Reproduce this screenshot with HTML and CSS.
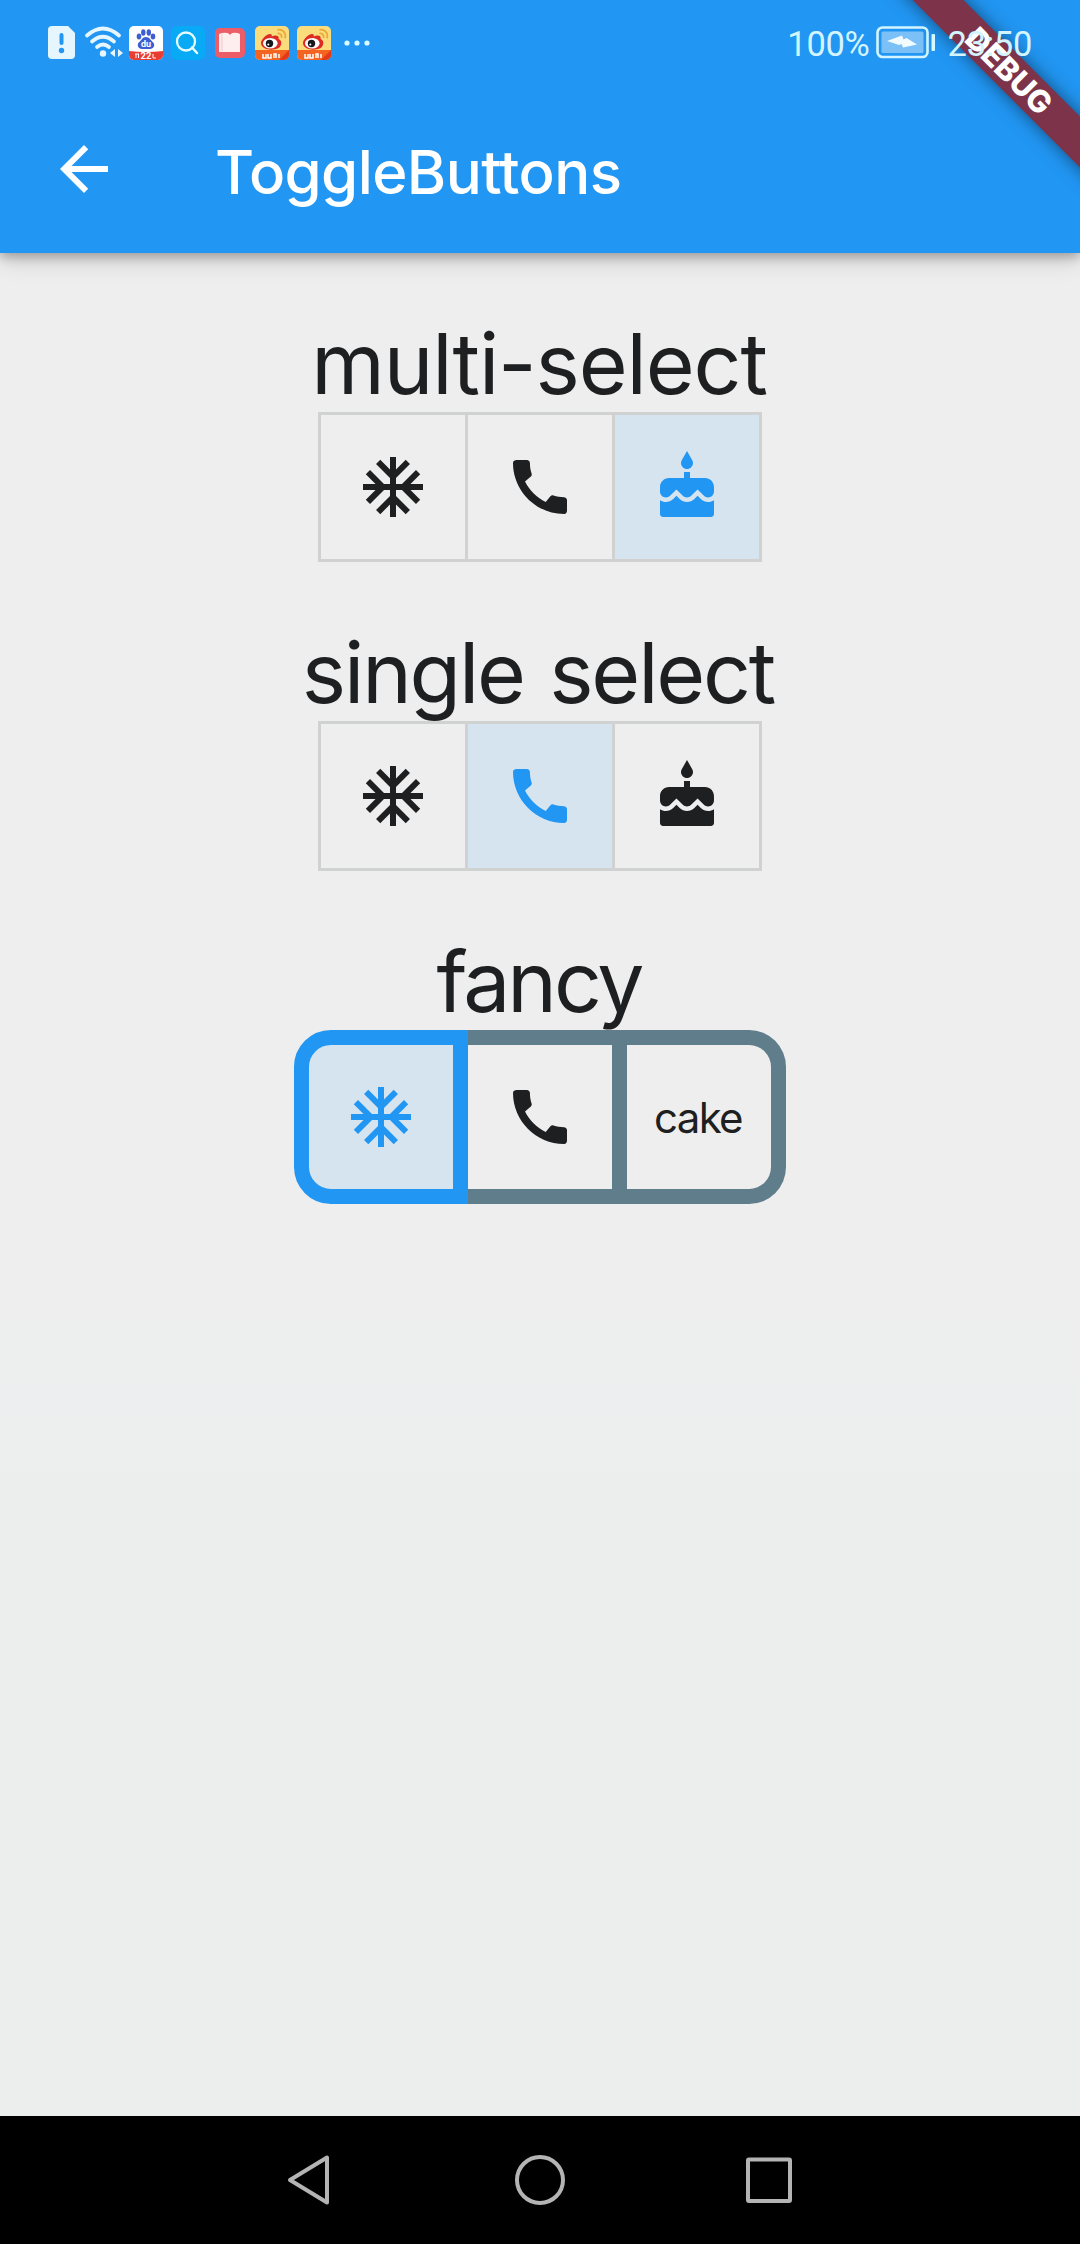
FILE: index.html
```html
<!DOCTYPE html>
<html lang="en">
<head>
<meta charset="utf-8">
<title>ToggleButtons</title>
<link rel="stylesheet" href="styles.css">
</head>
<body>
<svg class="defs" width="0" height="0">
  <symbol id="snow" viewBox="0 0 24 24"><path d="M22 11h-4.17l3.24-3.24-1.41-1.42L15 11h-2V9l4.66-4.66-1.42-1.41L13 6.17V2h-2v4.17L7.76 2.93 6.34 4.34 11 9v2H9L4.34 6.34 2.93 7.76 6.17 11H2v2h4.17l-3.24 3.24 1.41 1.42L9 13h2v2l-4.66 4.66 1.42 1.41L11 17.83V22h2v-4.17l3.24 3.24 1.42-1.41L13 15v-2h2l4.66 4.66 1.41-1.42L17.83 13H22z"/></symbol>
  <symbol id="call" viewBox="0 0 24 24"><path d="M20.01 15.38c-1.23 0-2.42-.2-3.53-.56-.35-.12-.74-.03-1.01.24l-1.57 1.97c-2.83-1.35-5.48-3.9-6.89-6.83l1.95-1.66c.27-.28.35-.67.24-1.02-.37-1.11-.56-2.3-.56-3.53 0-.54-.45-.99-.99-.99H4.19C3.65 3 3 3.24 3 3.99 3 13.28 10.73 21 20.01 21c.71 0 .99-.63.99-1.18v-3.45c0-.54-.45-.99-.99-.99z"/></symbol>
  <symbol id="cake" viewBox="0 0 24 24"><path d="M12 6c1.11 0 2-.9 2-2 0-.38-.1-.73-.29-1.03L12 0l-1.71 2.97c-.19.3-.29.65-.29 1.03 0 1.1.9 2 2 2zm4.6 9.99l-1.07-1.07-1.08 1.07c-1.3 1.3-3.58 1.31-4.89 0l-1.07-1.07-1.09 1.07C6.75 16.64 5.88 17 4.96 17c-.73 0-1.4-.23-1.96-.61V21c0 .55.45 1 1 1h16c.55 0 1-.45 1-1v-4.61c-.56.38-1.23.61-1.96.61-.92 0-1.79-.36-2.44-1.01zM18 9h-5V7h-2v2H6c-1.66 0-3 1.34-3 3v1.54c0 1.08.88 1.96 1.96 1.96.52 0 1.02-.2 1.38-.57l2.14-2.13 2.13 2.13c.74.74 2.03.74 2.77 0l2.14-2.13 2.13 2.13c.37.37.86.57 1.38.57 1.08 0 1.96-.88 1.96-1.96V12C21 10.34 19.66 9 18 9z"/></symbol>
  <symbol id="weibo" viewBox="0 0 34 34">
    <rect width="34" height="34" rx="5" fill="#fbdc7d"/>
    <path d="M0 24h34v5a5 5 0 0 1-5 5H5a5 5 0 0 1-5-5z" fill="#f4631f"/>
    <path d="M24 34l10-10v5a5 5 0 0 1-5 5z" fill="#e23a1a"/>
    <path d="M6 17c0-4 6-9 9-9 2 0 2 1 1.600 2.500 3-1.500 8-1.700 7 2.500 4 1 3.500 8-1 9.500-6 2.500-16.600 1-16.600-5.500z" fill="#dd2a22"/>
    <ellipse cx="15.300" cy="17.300" rx="7.300" ry="5.200" fill="#fff"/>
    <circle cx="14.500" cy="17.500" r="3.700" fill="#17181c"/><circle cx="13.300" cy="18.500" r="1" fill="#fff"/>
    <path d="M22.500 7.500c3-.6 4.800 2 4 4.500M22.500 3.800c5-1 9 3 7.600 8.600" fill="none" stroke="#e8a83a" stroke-width="1.700"/>
    <path d="M8 28v4h3v-4M13 28v4h3v-4M19 32v-4h2v4M24 28v4" fill="none" stroke="#fff" stroke-width="1.500"/>
  </symbol>
</svg>

<div class="phone">
  <header class="appbar">
    <div class="status">
      <div class="notices">
        <svg class="n-file" width="27" height="33" viewBox="0 0 27 33"><path d="M4 0h16l7 7v22a4 4 0 0 1-4 4H4a4 4 0 0 1-4-4V4a4 4 0 0 1 4-4z" fill="#e6f6ff"/><path d="M13.500 9v8" stroke="#2196f3" stroke-width="4" stroke-linecap="round"/><circle cx="13.500" cy="24.500" r="2.700" fill="#2196f3"/></svg>
        <svg class="n-wifi" width="38" height="33" viewBox="0 0 38 33"><g fill="none" stroke="#e6f6ff" stroke-width="3.700" stroke-linecap="round"><path d="M2 9.500Q18-4.500 34 9.500"/><path d="M7 15.500q11-9.500 22 0"/><path d="M12 21q6-5 12 0"/></g><circle cx="18" cy="27.500" r="3.200" fill="#e6f6ff"/><path d="M30 23v8l-5-4zM33 23v8l5-4z" fill="#e6f6ff"/></svg>
        <svg class="n-baidu" width="34" height="34" viewBox="0 0 34 34"><rect width="34" height="34" rx="5" fill="#fff"/><g fill="#3d5ed0"><ellipse cx="10" cy="10.500" rx="2.300" ry="3"/><ellipse cx="14.300" cy="6.500" rx="2.200" ry="3.200"/><ellipse cx="19.800" cy="6.500" rx="2.200" ry="3.200"/><ellipse cx="24" cy="10.500" rx="2.300" ry="3"/><path d="M17 11c3.500 0 4.500 3.200 7 5.200 2.600 2.600.8 6.800-3 6.800h-8c-3.800 0-5.600-4.200-3-6.800 2.500-2 3.500-5.200 7-5.200z"/></g><path d="M0 25q17 2 34 0v4a5 5 0 0 1-5 5H5a5 5 0 0 1-5-5z" fill="#ea3d32"/><text class="mini" x="17" y="21" font-size="9">du</text><text class="mini" x="17" y="33" font-size="9.500">22</text><path d="M6 28h4M7 28v4M9.500 28v4M24 28v4h3" fill="none" stroke="#fff"/></svg>
        <svg class="n-search" width="34" height="34" viewBox="0 0 34 34"><rect width="34" height="34" rx="6" fill="#08a9f5"/><circle cx="15" cy="15.500" r="9" fill="none" stroke="#e6fbff" stroke-width="2.300"/><path d="M21 21.500l5 5.500" stroke="#e6fbff" stroke-width="2.500" stroke-linecap="round"/></svg>
        <svg class="n-book" width="30" height="30" viewBox="0 0 30 30"><rect width="30" height="30" rx="5" fill="#ec5d68"/><path d="M4 6q6-2.500 11 0 5-2.500 10 0v18H4z" fill="#ffeeee"/><path d="M7 6v17" stroke="#f8ccd1" stroke-width="1.200"/><path d="M13 4.500h4l-2 2.500z" fill="#ec5d68"/></svg>
        <svg class="n-weibo" width="34" height="34"><use href="#weibo"/></svg>
        <svg class="n-weibo2" width="34" height="34"><use href="#weibo"/></svg>
        <svg class="n-dots" width="26" height="6" viewBox="0 0 26 6" fill="#d9fbff"><circle cx="3" cy="3" r="2.600"/><circle cx="13" cy="3" r="2.600"/><circle cx="23" cy="3" r="2.600"/></svg>
      </div>
      <div class="system">
        <span class="percent">100%</span>
        <svg class="battery" width="60" height="33" viewBox="0 0 60 33"><rect x="1.500" y="1.500" width="50" height="29.500" rx="5" fill="none" stroke="#d3f5ff" stroke-width="2.600"/><rect x="5.500" y="5.500" width="42" height="21.500" rx="1.500" fill="#7cc0f8"/><path d="M11 15l15-5.500 1.500 4 3-1.500 10.500 6.500-14 3-1.500-3.500-2.500 1z" fill="#f2fcff"/><rect x="55.500" y="8" width="3.500" height="17" rx="1" fill="#d9f7ff"/></svg>
        <span class="clock">23:50</span>
      </div>
    </div>
    <div class="toolbar">
      <svg class="back" viewBox="0 0 24 24"><path d="M20 11H7.830l5.590-5.590L12 4l-8 8 8 8 1.410-1.410L7.830 13H20v-2z"/></svg>
      <h1 class="title">ToggleButtons</h1>
    </div>
    <div class="banner"><div class="ribbon"><span>DEBUG</span></div></div>
  </header>

  <main class="content">
    <section class="group">
      <h2 class="label multi">multi-select</h2>
      <div class="toggles">
        <div class="cell"><svg><use href="#snow"/></svg></div>
        <div class="cell"><svg><use href="#call"/></svg></div>
        <div class="cell on"><svg><use href="#cake"/></svg></div>
      </div>
    </section>
    <section class="group">
      <h2 class="label single">single select</h2>
      <div class="toggles">
        <div class="cell"><svg><use href="#snow"/></svg></div>
        <div class="cell on"><svg><use href="#call"/></svg></div>
        <div class="cell"><svg><use href="#cake"/></svg></div>
      </div>
    </section>
    <section class="group">
      <h2 class="label fancy-label">fancy</h2>
      <div class="toggles fancy">
        <div class="cell on"><svg><use href="#snow"/></svg></div>
        <div class="cell"><svg><use href="#call"/></svg></div>
        <div class="cell"><span class="cake-text">cake</span></div>
      </div>
    </section>
  </main>

  <nav class="navbar">
    <svg width="50" height="54" viewBox="0 0 50 54"><path d="M4 27L41 4.500v45z"/></svg>
    <svg width="54" height="54" viewBox="0 0 54 54"><circle cx="27" cy="27" r="23"/></svg>
    <svg width="50" height="54" viewBox="0 0 50 54"><rect x="4" y="6.500" width="42" height="41.500" rx="1"/></svg>
  </nav>
</div>
</body>
</html>
```
FILE: styles.css
```css
* { box-sizing: border-box; }
body { margin: 0; font-family: Inter, "Noto Sans", sans-serif; color: #1e1f20; }
.defs { position: absolute; }
.phone {
  width: 1080px;
  height: 2244px;
  display: flex;
  flex-direction: column;
  overflow: hidden;
  background: linear-gradient(#eeeeee 0, #eeeeef 1300px, #ebeeed 1700px, #ebeeed 2116px);
}

.appbar {
  position: relative;
  height: 253px;
  flex: none;
  background: #2196f3;
  box-shadow: 0 4px 10px rgba(0, 0, 0, .26), 0 8px 22px rgba(0, 0, 0, .14);
}
.status {
  position: relative;
  z-index: 2;
  height: 85px;
  display: flex;
  justify-content: space-between;
  align-items: center;
  padding: 0 48px;
}
.notices { display: flex; align-items: center; }
.n-wifi { margin-left: 10px; }
.n-baidu { margin-left: 6px; }
.n-search { margin-left: 8px; }
.n-book { margin-left: 10px; }
.n-weibo { margin-left: 10px; }
.n-weibo2 { margin-left: 8px; }
.n-dots { margin-left: 13px; }
.mini { font-family: Roboto, sans-serif; font-weight: 700; fill: #fff; text-anchor: middle; }
.system { display: flex; align-items: center; font: 34.5px/40px Roboto, sans-serif; color: #d3f5ff; }
.percent { padding-top: 3px; letter-spacing: -.3px; }
.battery { margin-left: 6px; }
.clock { margin-left: 12px; padding-top: 3px; letter-spacing: -.3px; }

.toolbar { height: 168px; display: flex; align-items: center; padding-left: 48px; }
.back { width: 72px; height: 72px; fill: #fff; }
.title { margin: 6px 0 0 95px; font-size: 60px; font-weight: 500; line-height: 72px; color: #fff; letter-spacing: -.6px; }

.banner { position: absolute; top: 0; right: 0; width: 253px; height: 253px; overflow: hidden; }
.ribbon {
  position: absolute;
  left: 2px;
  top: 53px;
  width: 360px;
  height: 36px;
  transform: rotate(45deg);
  background: #7d344a;
  box-shadow: 0 0 18px rgba(0, 0, 0, .5);
  color: #fff;
  font-size: 31px;
  font-weight: 800;
  line-height: 36px;
  text-align: center;
}

.content { flex: 1; display: flex; flex-direction: column; align-items: center; gap: 60px; padding-top: 60px; }
.group { display: flex; flex-direction: column; align-items: center; }
.label { margin: 0; height: 99px; padding-top: 1px; font-size: 84px; font-weight: 400; line-height: 99px; white-space: nowrap; }
.multi { margin-right: 2px; letter-spacing: -1.15px; }
.single { margin-right: 4px; letter-spacing: -2.2px; word-spacing: 4px; }
.fancy-label { margin-right: 2px; letter-spacing: -3px; }
.toggles { display: flex; border: 3px solid #d0d1d1; }
.cell { width: 147px; height: 144px; display: flex; align-items: center; justify-content: center; border-right: 3px solid #d0d1d1; }
.cell:last-child { width: 144px; border-right: 0; }
.cell svg { width: 72px; height: 72px; fill: currentColor; }
.cell.on { color: #2196f3; background: #d6e4f0; }

.fancy { border: 0; }
.fancy .cell { width: 159px; height: 174px; border: 15px solid #607d8b; border-left: 0; }
.fancy .cell:first-child { width: 174px; border: 15px solid #2196f3; border-radius: 37px 0 0 37px; }
.fancy .cell:last-child { width: 159px; border-radius: 0 37px 37px 0; }
.cake-text { padding: 2px 2px 0 0; font-size: 42px; line-height: 50px; letter-spacing: -1.7px; }

.navbar { height: 128px; flex: none; display: flex; align-items: center; justify-content: center; gap: 177px; background: #000; }
.navbar svg { fill: none; stroke: #b4b4b4; stroke-width: 4; stroke-linejoin: round; }
```
